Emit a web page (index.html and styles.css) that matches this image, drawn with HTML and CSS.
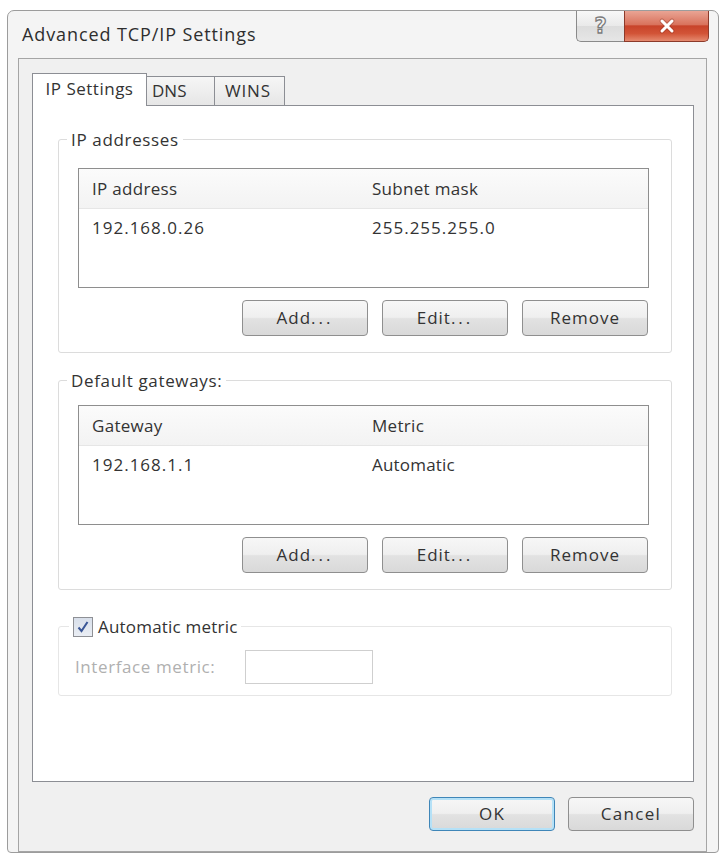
FILE: index.html
```html
<!DOCTYPE html>
<html>
<head>
<meta charset="utf-8">
<link rel="stylesheet" href="styles.css">
</head>
<body>
<div class="window">
  <div class="titlebar">
    <span class="title">Advanced TCP/IP Settings</span>
    <div class="caption">
      <div class="cap-btn help"><span class="q">?</span></div>
      <div class="cap-btn close">
        <svg width="22" height="18" viewBox="0 0 22 18"><path d="M6 4 L16 14 M16 4 L6 14" stroke="#8a3020" stroke-width="5" stroke-linecap="round" opacity="0.35"/><path d="M6 4 L16 14 M16 4 L6 14" stroke="#ffffff" stroke-width="3" stroke-linecap="round"/></svg>
      </div>
    </div>
  </div>
  <div class="client">
    <div class="tabs">
      <div class="tab active">IP Settings</div>
      <div class="tab t-dns">DNS</div>
      <div class="tab t-wins">WINS</div>
    </div>
    <div class="panel">
      <fieldset class="group g1">
        <legend>IP addresses</legend>
        <div class="listbox">
          <div class="lb-head"><span>IP address</span><span>Subnet mask</span></div>
          <div class="lb-row"><span>192.168.0.26</span><span>255.255.255.0</span></div>
        </div>
        <div class="btn-row">
          <button class="btn">Add<span class="dots">...</span></button>
          <button class="btn">Edit<span class="dots">...</span></button>
          <button class="btn">Remove</button>
        </div>
      </fieldset>
      <fieldset class="group g2">
        <legend>Default gateways:</legend>
        <div class="listbox">
          <div class="lb-head"><span>Gateway</span><span>Metric</span></div>
          <div class="lb-row"><span>192.168.1.1</span><span class="plain">Automatic</span></div>
        </div>
        <div class="btn-row">
          <button class="btn">Add<span class="dots">...</span></button>
          <button class="btn">Edit<span class="dots">...</span></button>
          <button class="btn">Remove</button>
        </div>
      </fieldset>
      <fieldset class="group g3">
        <legend class="chk-legend">
          <span class="checkbox"><svg width="14" height="14" viewBox="0 0 14 14"><path d="M2.5 7.5 L5.5 11 L11.5 2" fill="none" stroke="#3a5696" stroke-width="2"/></svg></span>
          <span>Automatic metric</span>
        </legend>
        <div class="metric-row">
          <span class="metric-label">Interface metric:</span>
          <span class="textbox"></span>
        </div>
      </fieldset>
    </div>
    <div class="dlg-buttons">
      <button class="btn default">OK</button>
      <button class="btn">Cancel</button>
    </div>
  </div>
</div>
</body>
</html>
```
FILE: styles.css
```css
body {
  margin: 0;
  background: #ffffff;
  font-family: "Open Sans", "Noto Sans", sans-serif;
  color: #333333;
}

.window {
  margin: 10px 0 0 7px;
  width: 710px;
  height: 841px;
  border: 1px solid #9c9c9c;
  border-radius: 7px 7px 4px 4px;
  background: #f4f4f4;
  display: flex;
  flex-direction: column;
}

.titlebar {
  height: 47px;
  display: flex;
  align-items: center;
  padding-left: 14px;
  padding-right: 9px;
}

.title {
  flex: 1;
  font-size: 18px;
  color: #2e2e2e;
  letter-spacing: 0.9px;
}

.caption {
  align-self: flex-start;
  display: flex;
  height: 31px;
}

.cap-btn {
  display: flex;
  align-items: center;
  justify-content: center;
  box-sizing: border-box;
  height: 31px;
  border: 1px solid #8a8a8a;
  border-top: none;
}

.help {
  width: 48px;
  border-radius: 0 0 0 5px;
  border-right: none;
  background: linear-gradient(#f8f8f8, #e9e9e9 50%, #dcdcdc 51%, #e6e6e6);
}

.q {
  font-family: "DejaVu Sans", sans-serif;
  font-size: 21px;
  font-weight: bold;
  color: #f4f4f4;
  -webkit-text-stroke: 1.3px #7c7c7c;
}

.close {
  width: 85px;
  border-radius: 0 0 5px 0;
  border-color: #8c3a2a;
  background: linear-gradient(#e9a494, #d9735d 45%, #c8432a 50%, #d25437 75%, #e58a6f);
}

.client {
  margin: 0 11px 0 10px;
  height: 787px;
  border: 1px solid #a5a5a5;
  background: #f0f0f0;
  padding: 14px 12px 0 13px;
  display: flex;
  flex-direction: column;
}

.tabs {
  display: flex;
  align-items: flex-end;
  height: 32px;
  font-size: 17px;
  letter-spacing: 0.5px;
}

.tab {
  box-sizing: border-box;
  height: 29px;
  border: 1px solid #8c8e94;
  border-bottom: none;
  background: linear-gradient(#f6f6f6, #e6e6e6);
  display: flex;
  align-items: center;
  color: #333333;
}

.tab.active {
  position: relative;
  z-index: 1;
  width: 115px;
  height: 33px;
  margin-bottom: -1px;
  background: #ffffff;
  justify-content: center;
  padding-bottom: 3px;
}

.t-dns {
  width: 68px;
  padding-left: 5px;
  border-left: none;
  letter-spacing: 0;
}

.t-wins {
  width: 70px;
  padding-left: 10px;
  border-left: none;
  letter-spacing: 0.8px;
}

.panel {
  box-sizing: border-box;
  height: 677px;
  background: #ffffff;
  border: 1px solid #8c8e94;
  padding: 23px 21px 0 25px;
  display: flex;
  flex-direction: column;
}

.group {
  margin: 0;
  padding: 17px 22px 16px 8px;
  border: 1px solid #dcdcdc;
  border-radius: 3px;
  min-inline-size: 0;
}

.group legend {
  padding: 0 4px;
  font-size: 17px;
  letter-spacing: 0.65px;
  line-height: 22px;
  color: #333333;
}

.g2 {
  margin-top: 17px;
  padding-top: 13px;
}

.g3 {
  margin-top: 26px;
  padding: 12px 22px 11px 8px;
  border-color: #e6e6e6;
}

.listbox {
  margin-left: 11px;
  height: 120px;
  box-sizing: border-box;
  border: 1px solid #8e8e8e;
  background: #ffffff;
  font-size: 17px;
  letter-spacing: 0.3px;
}

.lb-head,
.lb-row {
  display: grid;
  grid-template-columns: 280px 1fr;
  padding-left: 13px;
  align-items: center;
}

.lb-head {
  height: 39px;
  border-bottom: 1px solid #e6e6e6;
  background: linear-gradient(#fbfbfb, #f3f3f3);
}

.lb-row {
  height: 38px;
  letter-spacing: 1px;
}

.lb-row .plain {
  letter-spacing: 0.2px;
}

.btn-row {
  display: flex;
  justify-content: flex-end;
  gap: 14px;
  margin-top: 12px;
  margin-right: 1px;
}

.btn {
  width: 126px;
  height: 36px;
  box-sizing: border-box;
  border: 1px solid #8f8f8f;
  border-radius: 4px;
  background: linear-gradient(#f7f7f7, #efefef 48%, #e2e2e2 52%, #d9d9d9);
  font-family: inherit;
  font-size: 17px;
  letter-spacing: 1px;
  color: #333333;
  padding: 0;
}

.dots {
  letter-spacing: 3px;
}

.chk-legend {
  display: flex;
  align-items: center;
  gap: 5px;
  margin-left: 2px;
}

.group .chk-legend {
  letter-spacing: 0.2px;
}

.checkbox {
  width: 20px;
  height: 20px;
  box-sizing: border-box;
  border: 1px solid #8e9095;
  background: linear-gradient(#d8dfea, #eaeef4);
  display: flex;
  align-items: center;
  justify-content: center;
}

.metric-row {
  display: flex;
  align-items: center;
  padding-left: 8px;
}

.metric-label {
  width: 170px;
  font-size: 17px;
  letter-spacing: 0.6px;
  color: #b0b0b0;
}

.textbox {
  width: 128px;
  height: 34px;
  box-sizing: border-box;
  border: 1px solid #cfcfcf;
  background: #ffffff;
}

.dlg-buttons {
  display: flex;
  justify-content: flex-end;
  gap: 13px;
  margin-top: 15px;
}

.dlg-buttons .btn {
  height: 34px;
  letter-spacing: 1.3px;
}

.btn.default {
  border-color: #3f86b8;
  box-shadow: inset 0 0 0 2px #b5e1f7;
}
```
